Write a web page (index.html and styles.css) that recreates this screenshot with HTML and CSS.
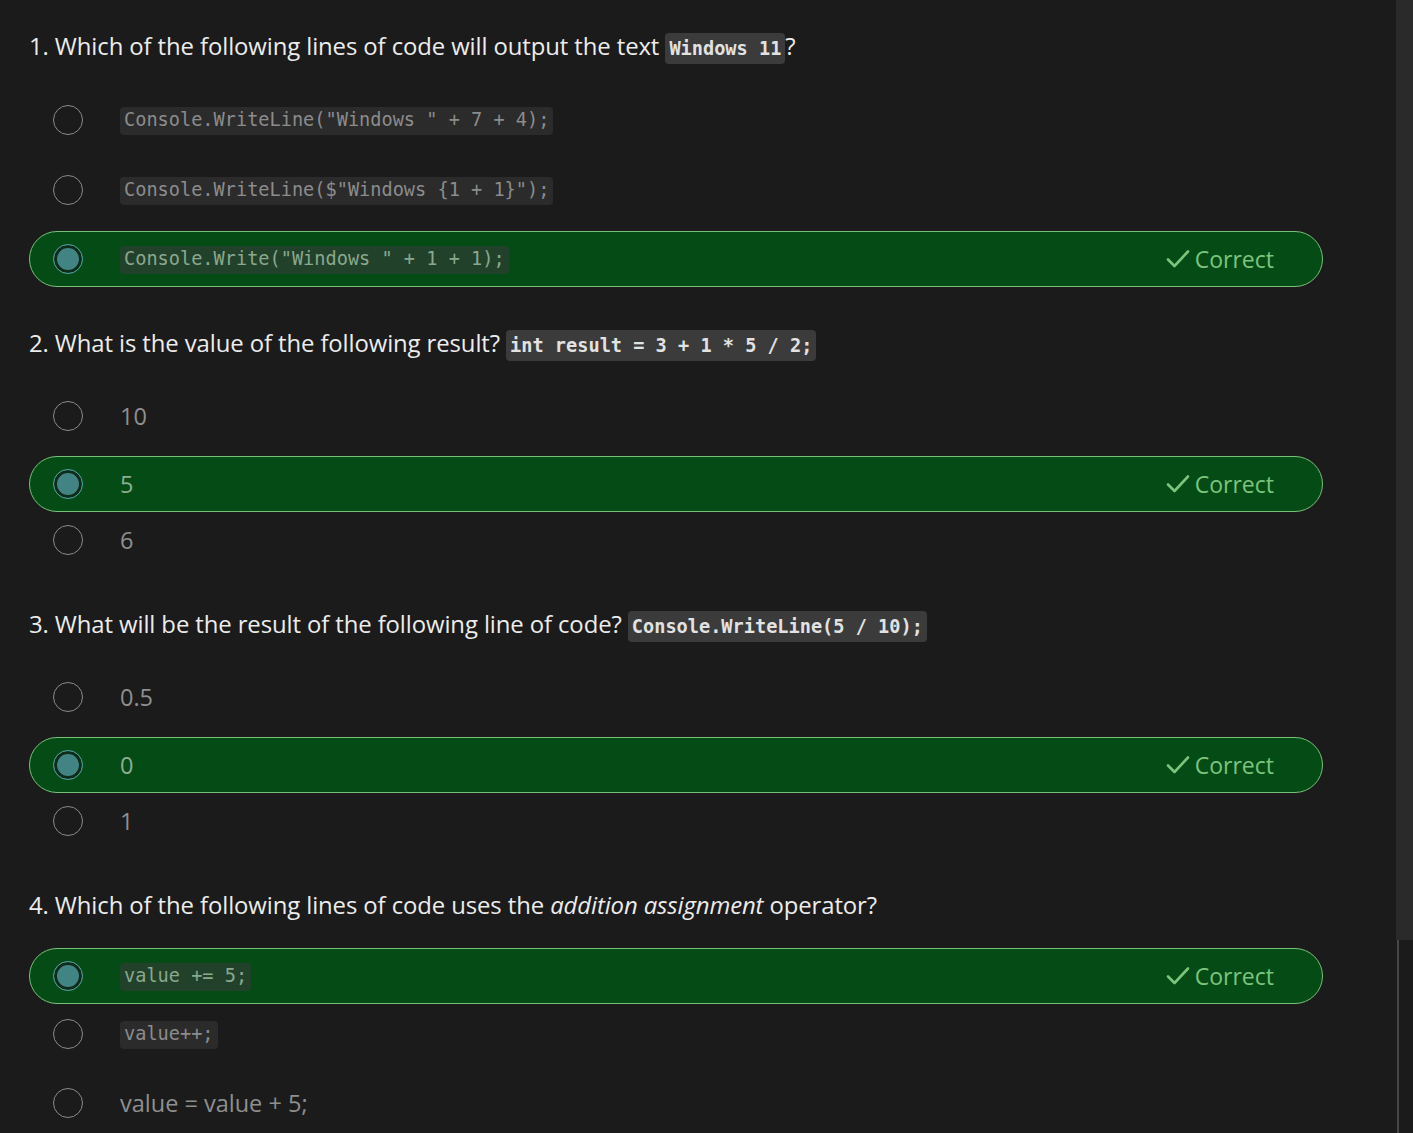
FILE: index.html
```html
<!DOCTYPE html>
<html lang="en">
<head>
<meta charset="utf-8">
<title>Quiz</title>
<link rel="stylesheet" href="styles.css">
</head>
<body>
<div class="page">
  <main class="quiz">
    <section class="question">
      <h2 class="q-title">1. Which of the following lines of code will output the text <code class="q-code">Windows 11</code>?</h2>
      <div class="option code-row"><span class="radio"></span><code class="o-code">Console.WriteLine("Windows " + 7 + 4);</code></div>
      <div class="option code-row"><span class="radio"></span><code class="o-code">Console.WriteLine($"Windows {1 + 1}");</code></div>
      <div class="option correct"><span class="radio on"></span><code class="o-code">Console.Write("Windows " + 1 + 1);</code>
        <span class="verdict"><svg class="check" width="24" height="20" viewBox="0 0 24 20"><polyline points="2,10.5 8.5,17 22,2.5" fill="none" stroke="#7cc47c" stroke-width="2.6" stroke-linecap="round" stroke-linejoin="round"/></svg>Correct</span></div>
    </section>

    <section class="question">
      <h2 class="q-title">2. What is the value of the following result? <code class="q-code">int result = 3 + 1 * 5 / 2;</code></h2>
      <div class="option"><span class="radio"></span><span class="o-text">10</span></div>
      <div class="option correct"><span class="radio on"></span><span class="o-text">5</span>
        <span class="verdict"><svg class="check" width="24" height="20" viewBox="0 0 24 20"><polyline points="2,10.5 8.5,17 22,2.5" fill="none" stroke="#7cc47c" stroke-width="2.6" stroke-linecap="round" stroke-linejoin="round"/></svg>Correct</span></div>
      <div class="option"><span class="radio"></span><span class="o-text">6</span></div>
    </section>

    <section class="question">
      <h2 class="q-title">3. What will be the result of the following line of code? <code class="q-code">Console.WriteLine(5 / 10);</code></h2>
      <div class="option"><span class="radio"></span><span class="o-text">0.5</span></div>
      <div class="option correct"><span class="radio on"></span><span class="o-text">0</span>
        <span class="verdict"><svg class="check" width="24" height="20" viewBox="0 0 24 20"><polyline points="2,10.5 8.5,17 22,2.5" fill="none" stroke="#7cc47c" stroke-width="2.6" stroke-linecap="round" stroke-linejoin="round"/></svg>Correct</span></div>
      <div class="option"><span class="radio"></span><span class="o-text">1</span></div>
    </section>

    <section class="question">
      <h2 class="q-title q-plain">4. Which of the following lines of code uses the <em>addition assignment</em> operator?</h2>
      <div class="option correct after-gap"><span class="radio on"></span><code class="o-code">value += 5;</code>
        <span class="verdict"><svg class="check" width="24" height="20" viewBox="0 0 24 20"><polyline points="2,10.5 8.5,17 22,2.5" fill="none" stroke="#7cc47c" stroke-width="2.6" stroke-linecap="round" stroke-linejoin="round"/></svg>Correct</span></div>
      <div class="option code-row"><span class="radio"></span><code class="o-code">value++;</code></div>
      <div class="option"><span class="radio"></span><span class="o-text">value = value + 5;</span></div>
    </section>
  </main>
  <aside class="rail">
    <div class="rail-top"></div>
    <div class="rail-bottom"></div>
  </aside>
</div>
</body>
</html>
```

FILE: styles.css
```css
html, body {
  margin: 0;
  padding: 0;
  background: #1b1b1b;
  height: 100%;
  overflow: hidden;
}

body {
  font-family: "Open Sans", "Noto Sans", "Liberation Sans", sans-serif;
  color: #e8e8e8;
}

.page {
  display: flex;
  height: 1133px;
}

.quiz {
  flex: 1;
  padding: 28px 0 0 29px;
}

.rail {
  width: 17px;
  display: flex;
  flex-direction: column;
}

.rail-top {
  height: 940px;
  background: #2a2a2a;
}

.rail-bottom {
  flex: 1;
  margin-left: 1px;
  border-left: 2px solid #474747;
}

.question {
  width: 1294px;
  margin-bottom: 38px;
}

.q-title {
  margin: 0 0 27px 0;
  font-size: 23.9px;
  font-weight: 400;
  line-height: 36px;
  height: 36px;
  color: #ececec;
  letter-spacing: -0.1px;
}

.q-plain {
  margin-bottom: 25px;
}

.q-title em {
  font-style: italic;
}

.q-code {
  font-family: "DejaVu Sans Mono", "Liberation Mono", monospace;
  font-weight: 700;
  font-size: 18.6px;
  line-height: 1;
  background: #3b3b3b;
  color: #e2e2e2;
  border-radius: 4px;
  padding: 5px 4px 5px;
  letter-spacing: 0;
}

.option {
  display: flex;
  align-items: center;
  box-sizing: border-box;
  height: 56px;
  border: 1px solid transparent;
  border-radius: 28px;
  padding: 0 48px 0 23px;
  margin-bottom: 12px;
}

.option.code-row {
  height: 58px;
}

.option:last-child {
  margin-bottom: 0;
}

.option.correct {
  background: #054b16;
  border-color: #78c078;
  margin-bottom: 0;
}

.option.correct.after-gap {
  margin-bottom: 1px;
}

.radio {
  box-sizing: border-box;
  width: 30px;
  height: 30px;
  border-radius: 50%;
  border: 1px solid #8a8a8a;
  margin-right: 37px;
  flex: none;
}

.radio.on {
  border-color: #4c9c9c;
  background: #428484;
  box-shadow: inset 0 0 0 3px #0e2c18;
}

.o-code {
  font-family: "DejaVu Sans Mono", "Liberation Mono", monospace;
  font-size: 18.6px;
  line-height: 1;
  color: #8c8c8c;
  background: #2b2b2b;
  border-radius: 4px;
  padding: 4px 4px 5px;
  margin-top: 2px;
}

.correct .o-code {
  background: #22412a;
  color: #8aa88e;
}

.o-text {
  font-size: 23.5px;
  color: #8f8f8f;
  margin-left: 0;
}

.correct .o-text {
  color: #8fae91;
}

.verdict {
  margin-left: auto;
  display: flex;
  align-items: center;
  gap: 5px;
  font-size: 23px;
  color: #7cc47c;
}

.check {
  display: block;
}
```
